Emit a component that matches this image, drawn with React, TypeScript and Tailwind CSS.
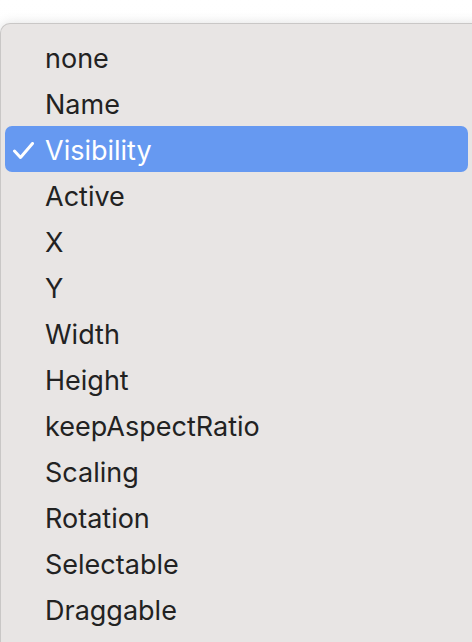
import React from "react";

const items = [
  "none",
  "Name",
  "Visibility",
  "Active",
  "X",
  "Y",
  "Width",
  "Height",
  "keepAspectRatio",
  "Scaling",
  "Rotation",
  "Selectable",
  "Draggable",
];

export default function App() {
  return (
    <div
      className="w-[472px] h-[642px] overflow-hidden bg-white bg-gradient-to-b from-white to-[#f1f1f1]"
      style={{ fontFamily: "Inter, 'Liberation Sans', sans-serif" }}
    >
      <div className="mt-[23px] w-[490px] h-[700px] rounded-tl-[10px] border-t border-l border-[#c9c7c6] bg-[#e8e5e4] pt-[10px] px-[4px] shadow-[0_0_12px_rgba(0,0,0,0.12)]">
        {items.map((it) => {
          const sel = it === "Visibility";
          return (
            <div
              key={it}
              className={
                "relative flex h-[46px] w-[463px] items-center rounded-[7px] pl-[40px] pt-[4px] text-[27px] " +
                (sel ? "bg-[#6699f1] text-white" : "text-[#222222]")
              }
            >
              {sel && (
                <svg
                  className="absolute left-[7px] top-[16px]"
                  width="24"
                  height="18"
                  viewBox="0 0 24 18"
                  fill="none"
                >
                  <path
                    d="M2.5 9 L8.5 15.5 L20.5 1.5"
                    stroke="white"
                    strokeWidth="3"
                    strokeLinecap="round"
                    strokeLinejoin="round"
                  />
                </svg>
              )}
              <span>{it}</span>
            </div>
          );
        })}
      </div>
    </div>
  );
}
